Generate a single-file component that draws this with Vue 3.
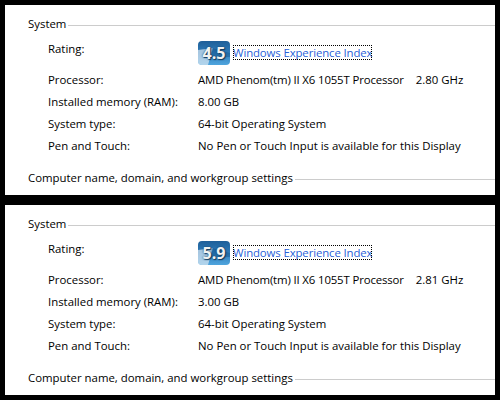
<script setup>
const panels = [
  { score: '4.5', speed: '2.80 GHz', ram: '8.00 GB' },
  { score: '5.9', speed: '2.81 GHz', ram: '3.00 GB' }
]
</script>

<template>
  <main class="page">
    <section class="panel" v-for="p in panels" :key="p.score">
      <div class="heading">
        <span>System</span>
        <i class="rule"></i>
      </div>
      <div class="rating">
        <span class="label rating-label">Rating:</span>
        <div class="value rating-value">
          <div class="badge">
            <svg width="32" height="24" viewBox="0 0 32 24">
              <defs>
                <linearGradient :id="'bg' + p.score" x1="0" y1="0" x2="0" y2="1">
                  <stop offset="0" stop-color="#1f5f98" />
                  <stop offset="0.5" stop-color="#2f7cba" />
                  <stop offset="1" stop-color="#4fa5de" />
                </linearGradient>
              </defs>
              <rect width="32" height="24" rx="4" :fill="'url(#bg' + p.score + ')'" />
              <path d="M0 9 L15 7 L10 24 L4 24 Q0 24 0 20 Z" fill="#dbe8f2" opacity="0.7" />
              <path d="M14 7 L32 12 L32 16 L12 16 Z" fill="#0f4f86" opacity="0.4" />
            </svg>
            <span class="score">{{ p.score }}</span>
          </div>
          <a class="link">Windows Experience Index</a>
        </div>
      </div>
      <div class="row">
        <span class="label">Processor:</span>
        <span class="value cpu"><span class="tight">AMD Phenom(tm) II X6 1055T Processor</span><span>{{ p.speed }}</span></span>
      </div>
      <div class="row">
        <span class="label">Installed memory (RAM):</span>
        <span class="value">{{ p.ram }}</span>
      </div>
      <div class="row">
        <span class="label">System type:</span>
        <span class="value">64-bit Operating System</span>
      </div>
      <div class="row">
        <span class="label">Pen and Touch:</span>
        <span class="value">No Pen or Touch Input is available for this Display</span>
      </div>
      <div class="heading bottom">
        <span>Computer name, domain, and workgroup settings</span>
        <i class="rule"></i>
      </div>
    </section>
  </main>
</template>

<style scoped>
.page {
  width: 500px;
  height: 400px;
  background: #000;
  padding: 5px;
  box-sizing: border-box;
  display: flex;
  flex-direction: column;
  gap: 10px;
  font-family: "Open Sans", "Noto Sans", sans-serif;
  font-size: 11.4px;
  color: #000;
  overflow: hidden;
}
.panel {
  height: 190px;
  background: #fff;
  padding: 10px 0 0 23px;
  box-sizing: border-box;
}
.heading {
  display: flex;
  align-items: center;
  height: 16px;
  gap: 2px;
  white-space: nowrap;
}
.rule {
  flex: 1;
  height: 1px;
  background: #ccc;
  margin-top: 5px;
}
.rating {
  display: flex;
  margin-top: 9px;
  padding-left: 20px;
  height: 29px;
}
.rating-label {
  line-height: 18px;
}
.rating-value {
  display: flex;
  align-items: flex-start;
  padding-top: 1px;
}
.badge {
  position: relative;
  width: 32px;
  height: 24px;
  margin-right: 3px;
}
.badge svg {
  display: block;
}
.score {
  position: absolute;
  inset: 0;
  text-align: center;
  line-height: 24px;
  font-weight: 700;
  font-size: 16px;
  color: #f2f2f2;
  text-shadow: 0 0 2px #12395c, 1px 1px 1px #12395c;
}
.link {
  color: #2a5fd8;
  outline: 1px dotted #000;
  outline-offset: -1px;
  margin-top: 4px;
  height: 15px;
  line-height: 15px;
  width: 139px;
  white-space: nowrap;
  letter-spacing: -0.12px;
}
.row {
  display: flex;
  padding-left: 20px;
  height: 22px;
  line-height: 22px;
  white-space: nowrap;
}
.label {
  width: 150px;
  flex: none;
}
.cpu {
  display: flex;
  gap: 12px;
}
.tight {
  letter-spacing: -0.14px;
}
.bottom {
  margin-top: 12px;
}
</style>
